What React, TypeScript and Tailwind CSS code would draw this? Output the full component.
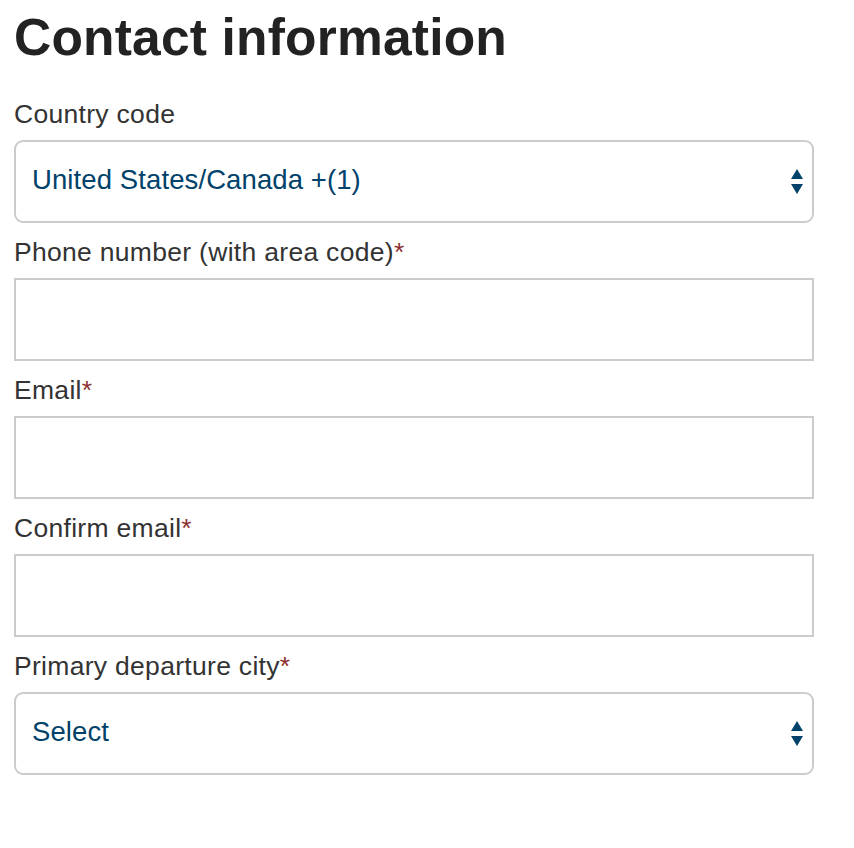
import React from "react"

const labelCls =
  "block mt-[13px] mb-[10px] h-[32px] text-[26.5px] leading-[32px] tracking-[0.3px] text-[#333333]"

function Required() {
  return <span className="text-[#8c2f2f]">*</span>
}

function SelectArrows() {
  return (
    <svg width="12" height="25" viewBox="0 0 12 25" className="shrink-0">
      <polygon points="6,0 12,10 0,10" fill="#01426a" />
      <polygon points="0,15 12,15 6,25" fill="#01426a" />
    </svg>
  )
}

function SelectBox({ value }: { value: string }) {
  return (
    <div className="flex h-[83px] w-[800px] items-center justify-between rounded-[9px] border-2 border-[#cccccc] bg-white pl-[16px] pr-[9px]">
      <span className="pb-[4px] text-[27.5px] tracking-[0.1px] text-[#01426a]">{value}</span>
      <SelectArrows />
    </div>
  )
}

function TextBox() {
  return <div className="h-[83px] w-[800px] border-2 border-[#cccccc] bg-white" />
}

export default function App() {
  return (
    <div
      className="min-h-[848px] w-[854px] bg-white pl-[14px] pt-[12px]"
      style={{ fontFamily: '"Liberation Sans", Arial, sans-serif' }}
    >
      <h1 className="text-[51.5px] font-bold leading-none tracking-[0.2px] text-[#222222]">Contact information</h1>

      <div className="mt-[34.5px]">
        <label className="block mb-[10px] h-[32px] text-[26.5px] leading-[32px] tracking-[0.3px] text-[#333333]">
          Country code
        </label>
        <SelectBox value="United States/Canada +(1)" />
      </div>

      <div>
        <label className={labelCls}>
          Phone number (with area code)
          <Required />
        </label>
        <TextBox />
      </div>

      <div>
        <label className={labelCls}>
          Email
          <Required />
        </label>
        <TextBox />
      </div>

      <div>
        <label className={labelCls}>
          Confirm email
          <Required />
        </label>
        <TextBox />
      </div>

      <div>
        <label className={labelCls}>
          Primary departure city
          <Required />
        </label>
        <SelectBox value="Select" />
      </div>
    </div>
  )
}
